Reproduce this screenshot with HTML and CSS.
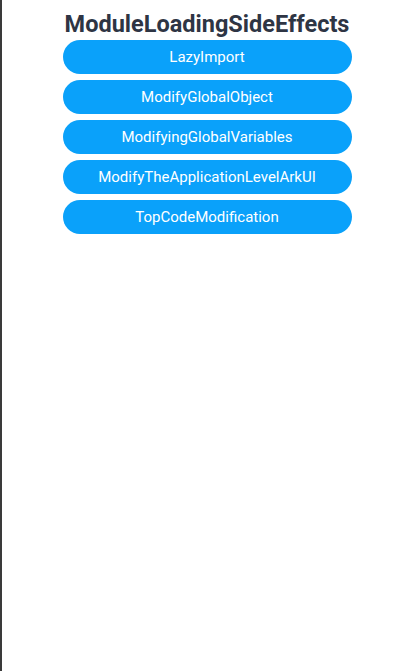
FILE: index.html
```html
<!DOCTYPE html>
<html>
<head>
<meta charset="utf-8">
<link rel="stylesheet" href="styles.css">
</head>
<body>
<div class="page">
  <h1 class="title">ModuleLoadingSideEffects</h1>
  <div class="list">
    <button class="btn">LazyImport</button>
    <button class="btn">ModifyGlobalObject</button>
    <button class="btn">ModifyingGlobalVariables</button>
    <button class="btn">ModifyTheApplicationLevelArkUI</button>
    <button class="btn">TopCodeModification</button>
  </div>
</div>
</body>
</html>
```
FILE: styles.css
```css
html, body {
  margin: 0;
  padding: 0;
  height: 100%;
  background: #fff;
}
body {
  font-family: Roboto, "Noto Sans", sans-serif;
}
.page {
  box-sizing: border-box;
  height: 100%;
  border-left: 2px solid #3a3a3a;
  display: flex;
  flex-direction: column;
  align-items: center;
}
.title {
  margin: 8px 0 0;
  height: 32px;
  line-height: 32px;
  font-size: 23.5px;
  font-weight: 700;
  color: #2e3544;
  letter-spacing: 0;
}
.list {
  display: flex;
  flex-direction: column;
  gap: 6px;
}
.btn {
  width: 289px;
  height: 34px;
  border: none;
  border-radius: 17px;
  background: #0aa1fa;
  color: #fff;
  font-family: Roboto, "Noto Sans", sans-serif;
  font-size: 15px;
  padding: 0;
}
```
